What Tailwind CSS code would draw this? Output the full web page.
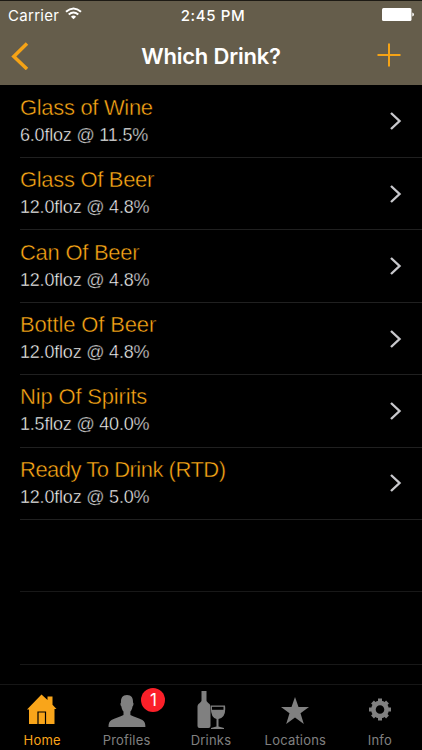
<!DOCTYPE html>
<html lang="en">
<head>
<meta charset="utf-8">
<title>Which Drink?</title>
<script src="https://cdn.jsdelivr.net/npm/@tailwindcss/browser@4"></script>
</head>
<body class="bg-black">
<div class="w-[422px] h-[750px] bg-black overflow-hidden flex flex-col font-['Inter',sans-serif] text-white">
  <header class="h-[85px] shrink-0 bg-[#655d4b] border-t border-[#1d1a14] flex flex-col">
    <div class="h-[27px] grid grid-cols-3 items-center pl-[8px] pr-[8px] text-[15px] leading-none">
      <div class="flex items-center gap-[6px] pt-px">
        <span class="tracking-[0.3px]">Carrier</span>
        <svg class="w-[17px] h-[13px] -mt-[3px]" viewBox="0 0 17 13" fill="none" stroke="#fff" stroke-width="2"><path d="M1 4.800Q8.500-1.800 16 4.800"/><path d="M3.700 7.600Q8.500 3.500 13.300 7.600"/><path d="M5.900 9.700Q8.500 7.500 11.100 9.700L8.500 12.300Z" fill="#fff" stroke="none"/></svg>
      </div>
      <div class="text-center font-medium tracking-[0.6px] pt-px pl-[4px]">2:45 PM</div>
      <svg class="w-[32px] h-[13px] justify-self-end" viewBox="0 0 32 13" fill="#fff"><rect x="0" y="0" width="29.500" height="13" rx="1.500"/><path d="M30.300 4.500q1.700.5 1.700 2t-1.700 2z"/></svg>
    </div>
    <div class="flex-1 grid grid-cols-[60px_1fr_60px] items-center pb-[2px]">
      <svg class="w-[18px] h-[28px] ml-[11px]" viewBox="0 0 18 28" fill="none" stroke="#f5a316" stroke-width="3.500"><path d="M16 1.500L2.800 14.500L16 27"/></svg>
      <h1 class="text-center text-[22px] leading-none font-semibold tracking-[-0.2px]">Which Drink?</h1>
      <svg class="w-[24px] h-[24px] justify-self-end mr-[21px] -mt-[2px]" viewBox="0 0 24 24" stroke="#f5a316" stroke-width="2"><path d="M12 .5V23.500M.5 12H23.500"/></svg>
    </div>
  </header>

  <main id="list" class="flex-1 min-h-0 overflow-hidden pt-[0.7px]"></main>

  <nav class="h-[66px] shrink-0 border-t border-[#161616] grid grid-cols-5 text-[13px] leading-none text-[#808080]">
    <div class="flex flex-col items-center text-[#f9a51a]">
      <svg class="w-[30px] h-[42px] shrink-0 mt-[6px] -ml-px" viewBox="0 0 30 42" fill="currentColor"><path d="M14.500 3.500L20.500 9V5.500H25.500V13.800L29.500 18H27.500V33H2V18.500H0Z"/><path d="M11 33V21h7.500V33" fill="none" stroke="#000" stroke-width="1.200"/></svg>
      <span class="mt-px tracking-[0.2px]">Home</span>
    </div>
    <div class="flex flex-col items-center relative">
      <svg class="w-[38px] h-[42px] shrink-0 mt-[6px]" viewBox="0 0 38 42" fill="currentColor"><path d="M19 4c4.500 0 6.300 3 6 7.500 .9.500.6 3-.5 4-.4 2.500-1.100 4-2.100 5v3.500c3 2 9 3 12 5 2.300 1.500 3 3.500 3 7H.5c0-3.500.7-5.500 3-7 3-2 9-3 12-5v-3.500c-1-1-1.700-2.500-2.100-5-1.100-1-1.300-3.500-.4-4C12.700 7 14.500 4 19 4Z"/></svg>
      <span class="mt-px tracking-[0.2px]">Profiles</span>
      <span class="absolute left-[57px] top-[3px] w-[24px] h-[24px] rounded-full bg-[#fb2029] text-white text-[17px] flex items-center justify-center">1</span>
    </div>
    <div class="flex flex-col items-center">
      <svg class="w-[30px] h-[42px] shrink-0 mt-[6px]" viewBox="0 0 30 42" fill="currentColor"><path d="M5.500 0h5v9.500c0 2 4 3 4 6V35q0 2-2 2h-9q-2 0-2-2V15.500c0-3 4-4 4-6Z"/><path d="M15 14.500H29q1.500 12-6.500 13.500V35.500l5.500 1.500v1H15v-1l5.500-1.500V28Q14 26 15 14.500Z"/><path d="M16 15.800h11.500v3h-11.500z" fill="#000"/></svg>
      <span class="mt-px tracking-[0.2px]">Drinks</span>
    </div>
    <div class="flex flex-col items-center">
      <svg class="w-[30px] h-[42px] shrink-0 mt-[6px]" viewBox="0 0 30 42" fill="currentColor"><path d="M15 6l3.500 10H29l-8.500 6.300L23.800 33 15 26.500 6.200 33l3.300-10.700L1 16h10.500Z"/></svg>
      <span class="mt-px tracking-[0.2px]">Locations</span>
    </div>
    <div class="flex flex-col items-center">
      <svg class="w-[24px] h-[42px] shrink-0 mt-[6px]" viewBox="0 0 24 42" fill="none" stroke="currentColor"><circle cx="12" cy="18.500" r="6.600" stroke-width="4.600"/><g stroke-width="4"><path d="M12 7.500v4M12 25.500v4M1 18.500h4M19 18.500h4M4.500 11l2.500 2.500M17 23.500l2.500 2.500M4.500 26l2.500-2.500M17 13.500l2.500-2.500"/></g></svg>
      <span class="mt-px tracking-[0.2px]">Info</span>
    </div>
  </nav>
</div>

<template id="row">
  <div class="h-[72.4px] flex">
    <div class="ml-[20px] flex-1 border-b border-[#202020] flex items-center pr-[20px]">
      <div class="flex-1 pb-px whitespace-nowrap font-['Liberation_Sans',sans-serif] [-webkit-text-stroke:0.45px_#000]">
        <div data-name class="text-[22px] leading-[28px] text-[#ffaa17]"></div>
        <div data-info class="text-[18px] leading-[26px] tracking-[-0.2px] text-[#ffffff]"></div>
      </div>
      <svg class="w-[13px] h-[20px]" viewBox="0 0 13 20" fill="none" stroke="#c8c8cc" stroke-width="2.400"><path d="M2 2L10.500 10L2 18"/></svg>
    </div>
  </div>
</template>
<template id="blank">
  <div class="h-[72.4px] flex"><div class="ml-[20px] flex-1 border-b border-[#181818]"></div></div>
</template>
<script>
// name, strength, tracking of the name
const drinks = [
  ['Glass of Wine', '6.0floz @ 11.5%', 'tracking-[-0.32px]'],
  ['Glass Of Beer', '12.0floz @ 4.8%', 'tracking-[-0.32px]'],
  ['Can Of Beer', '12.0floz @ 4.8%', 'tracking-[-0.27px]'],
  ['Bottle Of Beer', '12.0floz @ 4.8%', 'tracking-[-0.15px]'],
  ['Nip Of Spirits', '1.5floz @ 40.0%', 'tracking-[-0.17px]'],
  ['Ready To Drink (RTD)', '12.0floz @ 5.0%', 'tracking-[-0.5px]'],
];
const list = document.getElementById('list');
for (const [name, info, tracking] of drinks) {
  const row = document.getElementById('row').content.cloneNode(true);
  const title = row.querySelector('[data-name]');
  title.textContent = name;
  title.classList.add(tracking);
  row.querySelector('[data-info]').textContent = info;
  list.append(row);
}
for (let i = 0; i < 2; i++) list.append(document.getElementById('blank').content.cloneNode(true));
</script>
</body>
</html>
